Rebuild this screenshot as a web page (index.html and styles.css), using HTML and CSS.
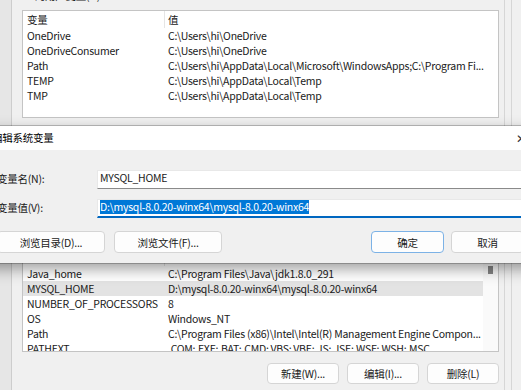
FILE: index.html
```html
<!DOCTYPE html>
<html lang="zh-CN">
<head>
  <meta charset="UTF-8">
  <meta name="viewport" content="width=device-width, initial-scale=1.0">
  <title>环境变量</title>
  <link rel="stylesheet" href="styles.css">
</head>
<body>
  <div class="EnvWindow">
    <div class="SideStrip"></div>

    <main class="EnvMain">
      <div class="GroupLabel">hi 的用户变量(U)</div>
      <div class="VarList UserList">
        <div class="VarRows">
          <div class="VarRow VarHeader"><span>变量</span><span>值</span></div>
          <div class="VarRow"><span>OneDrive</span><span>C:\Users\hi\OneDrive</span></div>
          <div class="VarRow"><span>OneDriveConsumer</span><span>C:\Users\hi\OneDrive</span></div>
          <div class="VarRow"><span>Path</span><span>C:\Users\hi\AppData\Local\Microsoft\WindowsApps;C:\Program Fi...</span></div>
          <div class="VarRow"><span>TEMP</span><span>C:\Users\hi\AppData\Local\Temp</span></div>
          <div class="VarRow"><span>TMP</span><span>C:\Users\hi\AppData\Local\Temp</span></div>
        </div>
      </div>

      <div class="VarList SystemList">
        <div class="VarRows">
          <div class="VarRow VarHeader"><span>变量</span><span>值</span></div>
          <div class="VarRow"><span>Java_home</span><span>C:\Program Files\Java\jdk1.8.0_291</span></div>
          <div class="VarRow selected"><span>MYSQL_HOME</span><span>D:\mysql-8.0.20-winx64\mysql-8.0.20-winx64</span></div>
          <div class="VarRow"><span>NUMBER_OF_PROCESSORS</span><span>8</span></div>
          <div class="VarRow"><span>OS</span><span>Windows_NT</span></div>
          <div class="VarRow"><span>Path</span><span>C:\Program Files (x86)\Intel\Intel(R) Management Engine Compon...</span></div>
          <div class="VarRow"><span>PATHEXT</span><span>.COM;.EXE;.BAT;.CMD;.VBS;.VBE;.JS;.JSE;.WSF;.WSH;.MSC</span></div>
        </div>
        <div class="ScrollTrack"><div class="ScrollThumb"></div></div>
      </div>

      <div class="ButtonRow">
        <button class="WinButton">新建(W)...</button>
        <button class="WinButton">编辑(I)...</button>
        <button class="WinButton">删除(L)</button>
      </div>
    </main>

    <div class="RightStrip"></div>
  </div>

  <!-- 编辑系统变量 dialog, lies over the window -->
  <section class="EditDialog">
    <div class="DialogTitle">
      <span>编辑系统变量</span>
      <span class="CloseButton">✕</span>
    </div>
    <div class="DialogBody">
      <div class="FormGrid">
        <label class="FieldLabel">变量名(N):</label>
        <div class="TextField">MYSQL_HOME</div>
        <label class="FieldLabel">变量值(V):</label>
        <div class="TextField focused"><span class="Selection">D:\mysql-8.0.20-winx64\mysql-8.0.20-winx64</span></div>
      </div>
      <div class="DialogButtons">
        <div class="ButtonGroup">
          <button class="WinButton wide">浏览目录(D)...</button>
          <button class="WinButton wide">浏览文件(F)...</button>
        </div>
        <div class="ButtonGroup">
          <button class="WinButton primary">确定</button>
          <button class="WinButton">取消</button>
        </div>
      </div>
    </div>
  </section>
</body>
</html>
```

FILE: styles.css
```css
* {
  margin: 0;
  padding: 0;
  box-sizing: border-box;
}

body {
  width: 521px;
  height: 390px;
  overflow: hidden;
  position: relative;
  background: #f0f0f0;
  font-family: 'Noto Sans CJK SC', 'Noto Sans', sans-serif;
  font-size: 10.5px;
  letter-spacing: -0.25px;
  color: #1a1a1a;
}

/* Background window */
.EnvWindow {
  display: flex;
  height: 100%;
}

.SideStrip {
  width: 12px;
  background: #e6e6e6;
  border-right: 1px solid #cdcdcd;
}

.EnvMain {
  width: 493px;
  padding: 0 5px 0 10px;
  border-right: 1px solid #d6d6d6;
}

.RightStrip {
  width: 7px;
  border-right: 1px solid #d6d6d6;
}

.GroupLabel {
  height: 16px;
  line-height: 16px;
  margin: -12px 0 6px;
  padding-left: 2px;
}

.VarList {
  display: flex;
  background: white;
  border: 1px solid #c4c4c4;
  overflow: hidden;
}

.UserList {
  height: 108px;
}

.SystemList {
  height: 104px;
  margin-top: 130px;
}

.VarRows {
  flex: 1;
  min-width: 0;
}

.VarRow {
  display: grid;
  grid-template-columns: 142px 1fr;
  height: 15px;
  line-height: 15px;
  white-space: nowrap;
}

.VarRow span {
  padding-left: 4px;
  overflow: hidden;
}

.VarRow span + span {
  padding-left: 3px;
}

.VarHeader {
  height: 17px;
  line-height: 17px;
}

.VarHeader span:first-child {
  border-right: 1px solid #e5e5e5;
}

.VarRow.selected {
  background: #e3e3e3;
}

.ScrollTrack {
  width: 15px;
  background: #fafafa;
  padding-top: 17px;
}

.ScrollThumb {
  width: 5px;
  height: 8px;
  margin-left: 5px;
  background: #858585;
}

.ButtonRow {
  display: flex;
  justify-content: flex-end;
  gap: 8px;
  margin-top: 11px;
}

.WinButton {
  width: 72px;
  height: 21px;
  font: inherit;
  letter-spacing: inherit;
  color: #1a1a1a;
  background: #fdfdfd;
  border: 1px solid #d5d5d5;
  border-radius: 4px;
}

/* Edit dialog */
.EditDialog {
  position: absolute;
  left: -20px;
  top: 126px;
  width: 564px;
  background: #f0f0f0;
  box-shadow: 0 0 0 1px rgba(0, 0, 0, 0.22), 0 6px 14px rgba(0, 0, 0, 0.38);
}

.DialogTitle {
  display: flex;
  justify-content: space-between;
  align-items: center;
  height: 24px;
  padding: 0 0 2px 12px;
  background: white;
  color: #000;
}

.CloseButton {
  width: 46px;
  text-align: center;
  font-size: 12px;
  color: #333;
}

.DialogBody {
  padding: 20px 20px 10px 17px;
}

.FormGrid {
  display: grid;
  grid-template-columns: 100px 1fr;
  row-gap: 10px;
  align-items: center;
}

.FieldLabel {
  padding-bottom: 3px;
}

.TextField {
  height: 19px;
  line-height: 14px;
  padding-left: 2px;
  background: white;
  border: 1px solid #e8e8e8;
  border-bottom-color: #8a8a8a;
  white-space: nowrap;
}

.TextField.focused {
  border-bottom: 2px solid #0067c0;
}

.Selection {
  display: inline-block;
  line-height: 14px;
  background: #0078d7;
  color: white;
}

.DialogButtons {
  display: flex;
  justify-content: space-between;
  margin-top: 13px;
}

.ButtonGroup {
  display: flex;
  gap: 7px;
}

.DialogButtons .WinButton {
  width: 73px;
  height: 22px;
}

.DialogButtons .WinButton.wide {
  width: 108px;
}

.ButtonGroup:first-child {
  gap: 9px;
}

.WinButton.primary {
  border-color: #7cb2e6;
}
```
